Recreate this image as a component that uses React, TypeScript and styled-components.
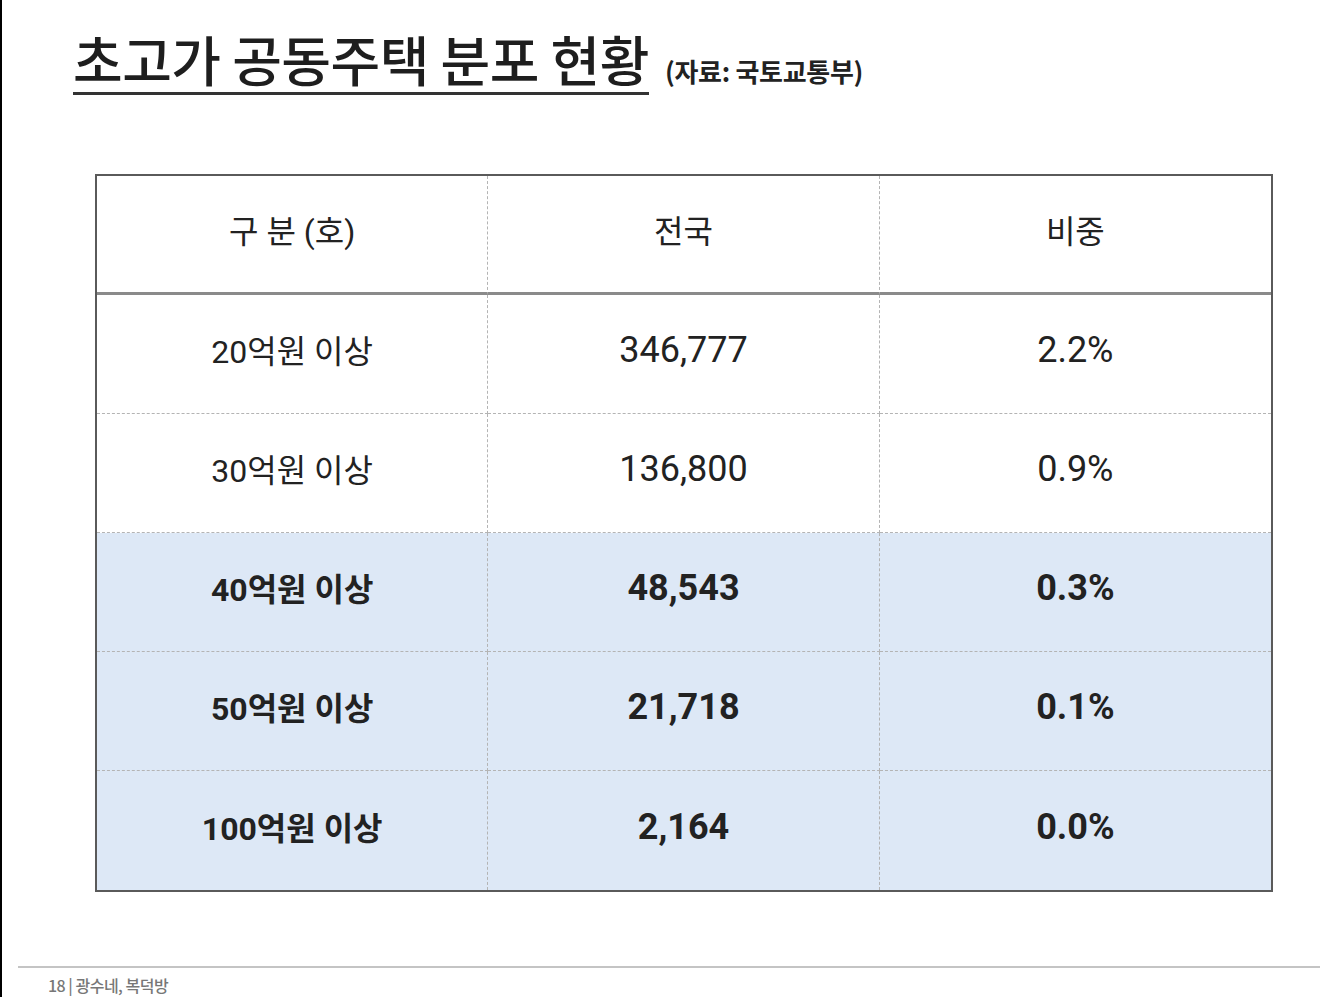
import styled, { createGlobalStyle } from "styled-components";

const GlobalStyle = createGlobalStyle`
  html, body {
    margin: 0;
    padding: 0;
    background: #ffffff;
  }
  * {
    box-sizing: border-box;
  }
`;

const Slide = styled.div`
  width: 1324px;
  height: 997px;
  border-left: 2px solid #000;
  background: #fff;
  display: flex;
  flex-direction: column;
  font-family: Roboto, "Noto Sans CJK KR", sans-serif;
  color: #222;
`;

const TitleRow = styled.div`
  display: flex;
  align-items: baseline;
  gap: 16px;
  padding: 27px 0 0 71px;
  height: 174px;
`;

const Title = styled.h1`
  margin: 0;
  font-family: "Noto Sans CJK KR", sans-serif;
  font-size: 54px;
  font-weight: 500;
  letter-spacing: -0.5px;
  line-height: 1.2;
  color: #1e1e1e;
  border-bottom: 3px solid #333;
`;

const Source = styled.span`
  font-family: "Noto Sans CJK KR", sans-serif;
  font-size: 26px;
  font-weight: 700;
  letter-spacing: -0.3px;
  color: #222;
`;

const Table = styled.div`
  margin-left: 93px;
  width: 1178px;
  display: grid;
  grid-template-columns: repeat(3, 1fr);
  grid-auto-rows: 119px;
  border: 2px solid #5a5a5a;
`;

const Cell = styled.div<{
  $head?: boolean;
  $hi?: boolean;
  $num?: boolean;
  $last?: boolean;
  $lastRow?: boolean;
}>`
  display: flex;
  align-items: center;
  justify-content: center;
  font-family: ${(p) => (p.$num ? "Roboto, sans-serif" : "Roboto, \"Noto Sans CJK KR\", sans-serif")};
  font-size: ${(p) => (p.$num ? "36px" : "32px")};
  font-weight: ${(p) => (p.$hi ? 700 : 400)};
  color: #222;
  background: ${(p) => (p.$hi ? "#dde8f6" : "#fff")};
  border-right: ${(p) => (p.$last ? "none" : "1px dashed #b4b4b4")};
  border-bottom: ${(p) =>
    p.$head ? "3px solid #8a8a8a" : p.$lastRow ? "none" : "1px dashed #b4b4b4"};
  padding-bottom: ${(p) => (p.$num ? "8px" : "10px")};
`;

const Footer = styled.div`
  margin-top: auto;
  margin-left: 16px;
  width: 1302px;
  border-top: 2px solid #c4c4c4;
  padding: 5px 0 0 30px;
  height: 31px;
  font-family: "Noto Sans CJK KR", sans-serif;
  font-size: 16px;
  font-weight: 500;
  letter-spacing: -0.5px;
  color: #777;
`;

const header = ["구 분 (호)", "전국", "비중"];

const rows = [
  { label: "20억원 이상", total: "346,777", share: "2.2%", hi: false },
  { label: "30억원 이상", total: "136,800", share: "0.9%", hi: false },
  { label: "40억원 이상", total: "48,543", share: "0.3%", hi: true },
  { label: "50억원 이상", total: "21,718", share: "0.1%", hi: true },
  { label: "100억원 이상", total: "2,164", share: "0.0%", hi: true },
];

function App() {
  return (
    <>
      <GlobalStyle />
      <Slide>
        <TitleRow>
          <Title>초고가 공동주택 분포 현황</Title>
          <Source>(자료: 국토교통부)</Source>
        </TitleRow>
        <Table>
          {header.map((h, i) => (
            <Cell key={h} $head $last={i === 2}>
              {h}
            </Cell>
          ))}
          {rows.map((r, ri) => {
            const lastRow = ri === rows.length - 1;
            return [r.label, r.total, r.share].map((v, ci) => (
              <Cell
                key={`${ri}-${ci}`}
                $hi={r.hi}
                $num={ci > 0}
                $last={ci === 2}
                $lastRow={lastRow}
              >
                {v}
              </Cell>
            ));
          })}
        </Table>
        <Footer>18 | 광수네, 복덕방</Footer>
      </Slide>
    </>
  );
}

export default App;
